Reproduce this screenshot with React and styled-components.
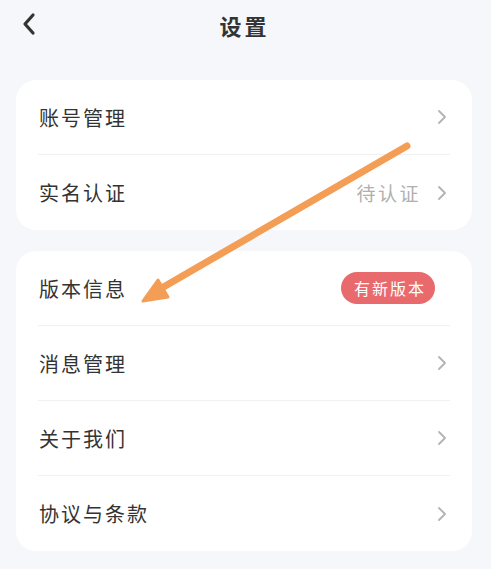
import styled, { createGlobalStyle } from "styled-components";

const GlobalStyle = createGlobalStyle`
  html, body {
    margin: 0;
    padding: 0;
    background: #f5f7fa;
  }
  body {
    font-family: "Noto Sans CJK SC", "Noto Sans", sans-serif;
  }
  * {
    box-sizing: border-box;
  }
`;

const groups = [
  [
    { label: "账号管理" },
    { label: "实名认证", value: "待认证" },
  ],
  [
    { label: "版本信息", badge: "有新版本" },
    { label: "消息管理" },
    { label: "关于我们" },
    { label: "协议与条款" },
  ],
];

const Chevron = () => (
  <ChevronIcon viewBox="0 0 10 16" width="10" height="16">
    <path d="M2 2l6 6-6 6" fill="none" stroke="#b3b3b3" strokeWidth="1.8" strokeLinecap="round" strokeLinejoin="round" />
  </ChevronIcon>
);

const App = () => {
  return (
    <Page>
      <GlobalStyle />
      <Header>
        <BackButton>
          <svg viewBox="0 0 16 24" width="16" height="24">
            <path d="M12 3L4 12l8 9" fill="none" stroke="#333" strokeWidth="3.2" strokeLinecap="round" strokeLinejoin="round" />
          </svg>
        </BackButton>
        <Title>设置</Title>
      </Header>

      {groups.map((rows, i) => (
        <Card key={i}>
          {rows.map((row) => (
            <Row key={row.label}>
              <Label>{row.label}</Label>
              <Right>
                {row.value && <Value>{row.value}</Value>}
                {row.badge ? <Badge>{row.badge}</Badge> : <Chevron />}
              </Right>
            </Row>
          ))}
        </Card>
      ))}

      <Annotation viewBox="0 0 491 569" width="491" height="569">
        <line x1="407" y1="146" x2="160" y2="289" stroke="#f39d55" strokeWidth="7" strokeLinecap="round" />
        <polygon points="143,301 158,280 168,297" fill="#f39d55" stroke="#f39d55" strokeWidth="3" strokeLinejoin="round" />
      </Annotation>
    </Page>
  );
};

const Page = styled.div`
  position: relative;
  width: 491px;
  min-height: 569px;
  padding: 0 19px 0 16px;
`;

const Header = styled.div`
  position: relative;
  height: 50px;
  display: flex;
  align-items: center;
  justify-content: center;
  margin-bottom: 30px;
`;

const BackButton = styled.div`
  position: absolute;
  left: 5px;
  top: 12px;
  display: flex;
`;

const Title = styled.div`
  font-size: 22px;
  font-weight: 700;
  color: #333;
  letter-spacing: 3px;
  margin-left: 1px;
`;

const Card = styled.div`
  background: #fff;
  border-radius: 20px;
  padding: 0 22px;
  margin-bottom: 21px;
`;

const Row = styled.div`
  height: 75px;
  display: flex;
  align-items: center;
  justify-content: space-between;
  border-bottom: 1px solid #f1f1f1;
  padding-left: 1px;

  &:last-child {
    border-bottom: none;
  }
`;

const Label = styled.span`
  font-size: 20px;
  color: #333;
  letter-spacing: 2px;
`;

const Right = styled.div`
  display: flex;
  align-items: center;
  gap: 16px;
`;

const Value = styled.span`
  font-size: 19px;
  color: #b0b0b0;
  letter-spacing: 2.5px;
`;

const ChevronIcon = styled.svg`
  margin-right: 3px;
`;

const Badge = styled.span`
  height: 32px;
  width: 94px;
  border-radius: 16px;
  background: #e96a6c;
  color: #fff;
  font-size: 16px;
  letter-spacing: 2px;
  padding-left: 4px;
  display: flex;
  align-items: center;
  justify-content: center;
  margin-right: 15px;
`;

const Annotation = styled.svg`
  position: absolute;
  left: 0;
  top: 0;
  pointer-events: none;
`;

export default App;
